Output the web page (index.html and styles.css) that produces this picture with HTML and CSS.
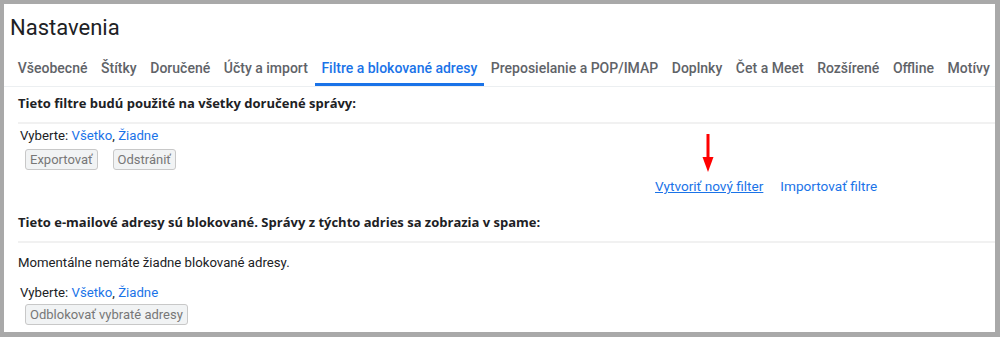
FILE: index.html
```html
<!DOCTYPE html>
<html lang="sk">
  <head>
    <meta charset="UTF-8" />
    <meta name="viewport" content="width=device-width, initial-scale=1.0" />
    <title>Nastavenia</title>
    <link rel="stylesheet" href="styles.css">
  </head>
  <body>
    <div class="frame">
      <h1 class="page-title">Nastavenia</h1>

      <nav class="tabs">
        <a class="tab" href="#">Všeobecné</a>
        <a class="tab" href="#">Štítky</a>
        <a class="tab" href="#">Doručené</a>
        <a class="tab" href="#">Účty a import</a>
        <a class="tab active" href="#">Filtre a blokované adresy</a>
        <a class="tab" href="#">Preposielanie a POP/IMAP</a>
        <a class="tab" href="#">Doplnky</a>
        <a class="tab" href="#">Čet a Meet</a>
        <a class="tab" href="#">Rozšírené</a>
        <a class="tab" href="#">Offline</a>
        <a class="tab" href="#">Motívy</a>
      </nav>

      <section class="section first">
        <h3 class="section-head">Tieto filtre budú použité na všetky doručené správy:</h3>
        <div class="section-body">
          <div class="select">Vyberte: <a href="#">Všetko</a>, <a href="#">Žiadne</a></div>
          <div class="buttons">
            <button class="btn" disabled>Exportovať</button>
            <button class="btn" disabled>Odstrániť</button>
          </div>
          <div class="filter-links">
            <span class="arrow-wrap">
              <a class="create" href="#">Vytvoriť nový filter</a>
              <svg class="arrow" width="12" height="38" viewBox="0 0 12 38">
                <rect x="4.5" y="0" width="3" height="25" fill="#ff0000" />
                <polygon points="0.5,23 11.5,23 6,38" fill="#ff0000" />
              </svg>
            </span>
            <a href="#">Importovať filtre</a>
          </div>
        </div>
      </section>

      <section class="section">
        <h3 class="section-head">Tieto e-mailové adresy sú blokované. Správy z týchto adries sa zobrazia v spame:</h3>
        <div class="section-body">
          <p class="empty">Momentálne nemáte žiadne blokované adresy.</p>
          <div class="select">Vyberte: <a href="#">Všetko</a>, <a href="#">Žiadne</a></div>
          <div class="buttons tight">
            <button class="btn" disabled>Odblokovať vybraté adresy</button>
          </div>
        </div>
      </section>
    </div>
  </body>
</html>
```

FILE: styles.css
```css
body {
  margin: 0;
  background-color: #a9a9a9;
  font-family: Roboto, "Liberation Sans", sans-serif;
  color: #202124;
}

.frame {
  margin: 4px 5px 5px 4px;
  height: 328px;
  background-color: #fff;
  overflow: hidden;
}

.page-title {
  margin: 0;
  padding: 9px 0 0 6px;
  font-family: Roboto, "Liberation Sans", sans-serif;
  font-size: 22px;
  font-weight: 400;
  line-height: 30px;
  color: #202124;
}

.tabs {
  display: flex;
  margin-top: 11px;
  padding-left: 7px;
  border-bottom: 1px solid #eceff1;
  white-space: nowrap;
}

.tab {
  padding: 6px 6.8px 6px;
  font-size: 14px;
  font-weight: 500;
  line-height: 17px;
  color: #5f6368;
  text-decoration: none;
  border-bottom: 3px solid transparent;
}

.tab.active {
  color: #1a73e8;
  border-bottom-color: #1a73e8;
}

.section {
  padding-left: 14px;
}

.section.first {
  padding-bottom: 11px;
}

.section-head {
  margin: 0;
  padding: 8px 0 10px;
  font-family: "Open Sans", Roboto, sans-serif;
  font-size: 13px;
  font-weight: 700;
  line-height: 17px;
  color: #202124;
  border-bottom: 2px solid #f1f1f1;
}

.section-body {
  padding: 3px 0 0 2px;
  font-size: 13.2px;
  line-height: 17px;
}

.select a,
.filter-links a {
  color: #1a73e8;
  text-decoration: none;
}

.buttons {
  display: flex;
  gap: 15px;
  padding: 5px 0 0 5px;
}

.buttons.tight {
  padding-top: 3px;
}

.btn {
  height: 21px;
  padding: 0 4px;
  font-family: Roboto, "Liberation Sans", sans-serif;
  font-size: 13px;
  color: #777;
  background-color: #f1f3f4;
  border: 1px solid #c8c8c8;
  border-radius: 3px;
}

.filter-links {
  display: flex;
  gap: 17px;
  padding: 8px 0 0 635px;
  font-size: 13.6px;
}

.arrow-wrap {
  position: relative;
}

.filter-links .create {
  text-decoration: underline;
}

.arrow {
  position: absolute;
  left: 47px;
  top: -44px;
}

.empty {
  margin: 8px 0 13px -2px;
}
```
